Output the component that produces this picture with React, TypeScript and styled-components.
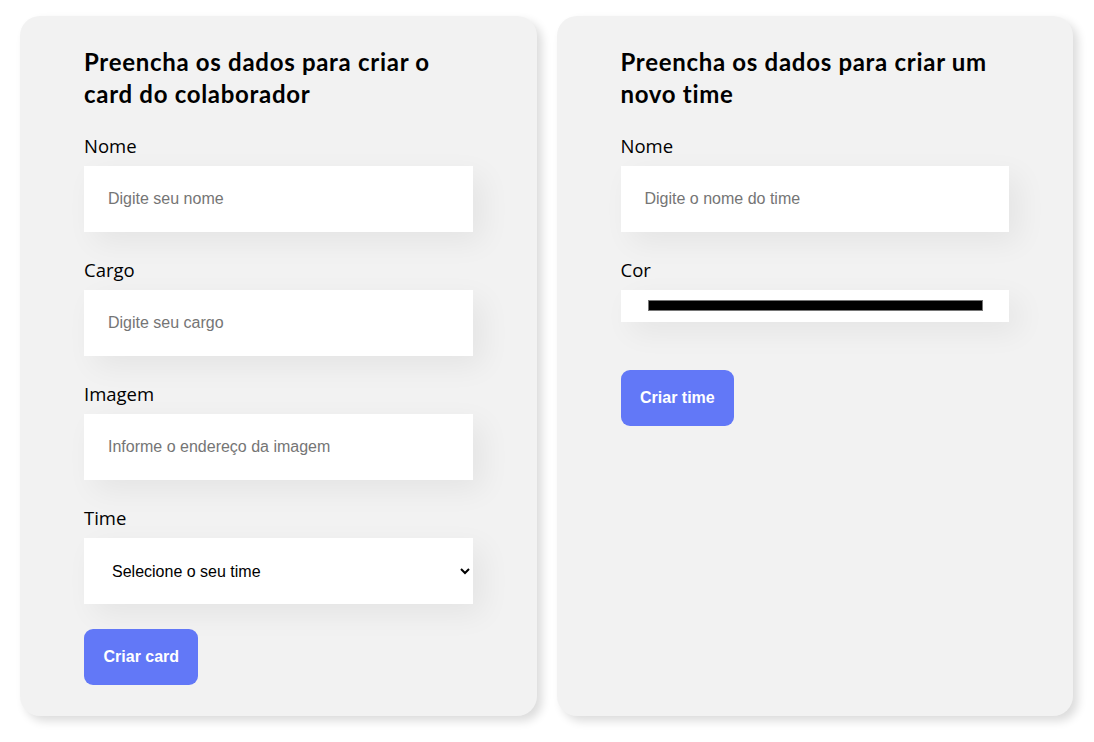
import React from "react";
import styled, { createGlobalStyle } from "styled-components";

const GlobalStyle = createGlobalStyle`
  html, body {
    margin: 0;
    padding: 0;
    background: #ffffff;
  }
  * { box-sizing: border-box; }
`;

const Page = styled.main`
  display: grid;
  grid-template-columns: 1fr 1fr;
  gap: 20px;
  padding: 16px 21px 24px 20px;
`;

const Card = styled.form`
  background: #f2f2f2;
  border-radius: 20px;
  padding: 30px 64px 31px;
  box-shadow: 5px 5px 10px rgba(0, 0, 0, 0.14);
  display: flex;
  flex-direction: column;
  align-items: flex-start;
`;

const Title = styled.h2`
  margin: 0 0 24px;
  width: 100%;
  font-family: Lato, "Open Sans", sans-serif;
  font-weight: 700;
  font-size: 24px;
  line-height: 32px;
  letter-spacing: 0.7px;
  color: #000;
`;

const Field = styled.div<{ $gap?: number }>`
  width: 100%;
  display: flex;
  flex-direction: column;
  margin-bottom: ${(p) => p.$gap ?? 26}px;
`;

const Label = styled.label`
  font-family: "Open Sans", "Noto Sans", sans-serif;
  font-size: 18.5px;
  line-height: 24px;
  color: #000;
  margin-bottom: 8px;
`;

const TextInput = styled.input`
  width: 100%;
  height: 66px;
  border: none;
  outline: none;
  background: #fff;
  padding: 0 24px;
  font-family: "Liberation Sans", Arial, sans-serif;
  font-size: 16px;
  color: #000;
  box-shadow: 10px 10px 30px rgba(0, 0, 0, 0.06);
  &::placeholder { color: #757575; }
`;

const Select = styled.select`
  width: 100%;
  height: 66px;
  border: none;
  outline: none;
  background: #fff;
  padding: 0 6px 0 24px;
  font-family: "Liberation Sans", Arial, sans-serif;
  font-size: 16px;
  color: #000;
  box-shadow: 10px 10px 30px rgba(0, 0, 0, 0.06);
`;

const ColorInput = styled.input`
  -webkit-appearance: none;
  appearance: none;
  width: 100%;
  height: 32px;
  border: none;
  padding: 0;
  margin: 0;
  background: #fff;
  box-shadow: 10px 10px 30px rgba(0, 0, 0, 0.06);
  cursor: pointer;
  &::-webkit-color-swatch-wrapper {
    padding: 10px 26px 11px 27px;
  }
  &::-webkit-color-swatch {
    border: 1px solid #767676;
    border-radius: 0;
  }
`;

const Button = styled.button`
  border: none;
  border-radius: 9px;
  background: #6278f7;
  color: #fff;
  font-family: "Liberation Sans", Arial, sans-serif;
  font-weight: 700;
  font-size: 16px;
  line-height: 16px;
  padding: 20px 19px 20px 19.5px;
  cursor: pointer;
`;

export default function App() {
  return (
    <>
      <GlobalStyle />
      <Page>
        <Card onSubmit={(e) => e.preventDefault()}>
          <Title>Preencha os dados para criar o card do colaborador</Title>
          <Field>
            <Label>Nome</Label>
            <TextInput placeholder="Digite seu nome" />
          </Field>
          <Field>
            <Label>Cargo</Label>
            <TextInput placeholder="Digite seu cargo" />
          </Field>
          <Field>
            <Label>Imagem</Label>
            <TextInput placeholder="Informe o endereço da imagem" />
          </Field>
          <Field $gap={25}>
            <Label>Time</Label>
            <Select defaultValue="">
              <option value="">Selecione o seu time</option>
            </Select>
          </Field>
          <Button type="submit">Criar card</Button>
        </Card>
        <Card onSubmit={(e) => e.preventDefault()}>
          <Title>Preencha os dados para criar um novo time</Title>
          <Field>
            <Label>Nome</Label>
            <TextInput placeholder="Digite o nome do time" />
          </Field>
          <Field $gap={48}>
            <Label>Cor</Label>
            <ColorInput type="color" defaultValue="#000000" />
          </Field>
          <Button type="submit">Criar time</Button>
        </Card>
      </Page>
    </>
  );
}
